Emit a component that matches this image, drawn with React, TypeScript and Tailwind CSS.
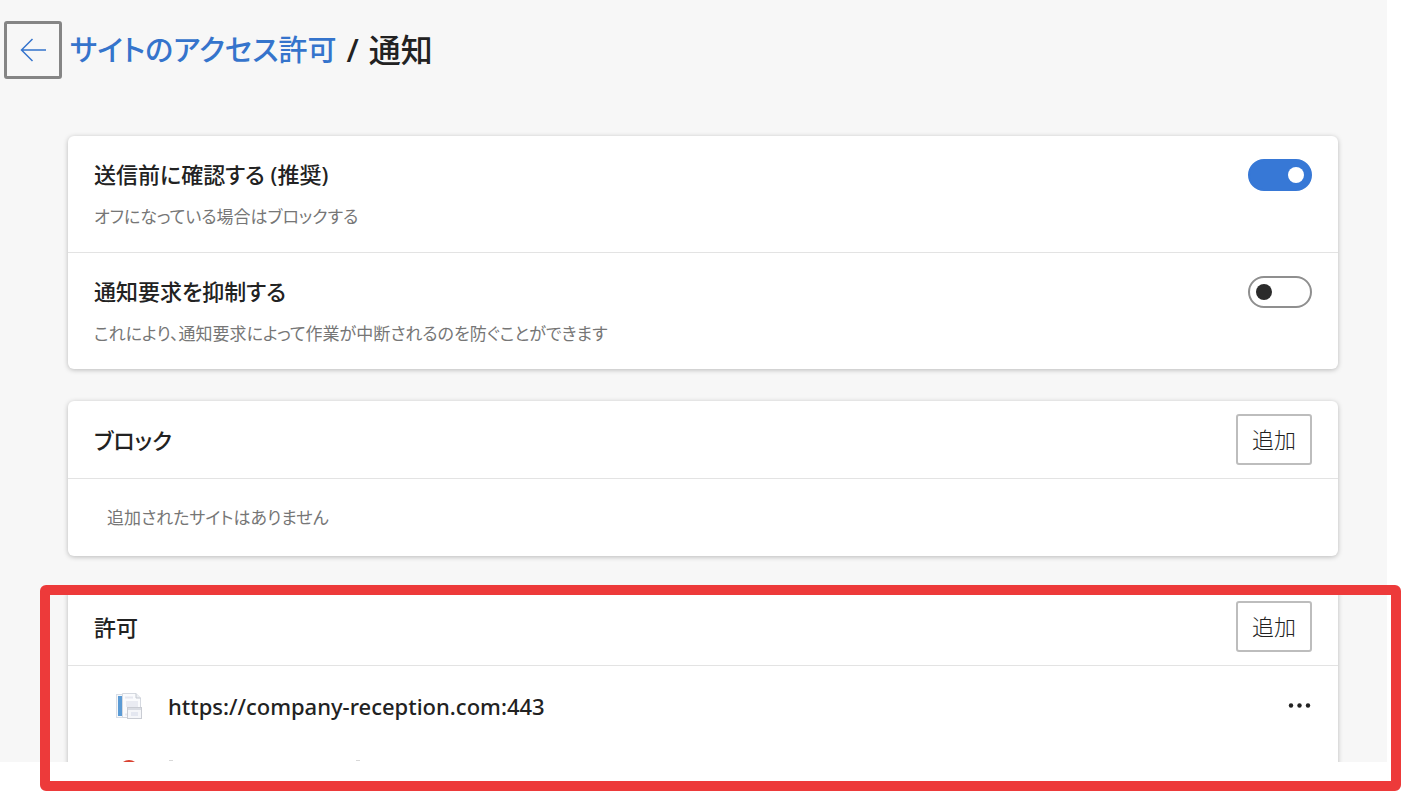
import { useState } from "react";

type SwitchRowProps = {
  id: string;
  title: string;
  description: string;
  checked: boolean;
  onChange: (value: boolean) => void;
};

function SwitchRow({ id, title, description, checked, onChange }: SwitchRowProps) {
  return (
    <div className="flex items-start justify-between px-[26px] pt-[23px] pb-[21px]">
      <div>
        <label htmlFor={id} className="block text-[22px] leading-[30px] font-medium">
          {title}
        </label>
        <p className="mt-3.5 text-[17px] leading-7 text-[#767676]">{description}</p>
      </div>
      <input
        id={id}
        type="checkbox"
        role="switch"
        checked={checked}
        onChange={(e) => onChange(e.target.checked)}
        className="flex h-8 w-16 shrink-0 cursor-pointer appearance-none items-center rounded-full border-2 border-[#8f8f8f] bg-white px-1.5 before:size-4 before:rounded-full before:bg-[#2b2b2b] checked:justify-end checked:border-[#3778d6] checked:bg-[#3778d6] checked:before:bg-white"
      />
    </div>
  );
}

function SectionHeader({ title }: { title: string }) {
  return (
    <div className="flex h-[78px] items-center justify-between px-[26px]">
      <h2 className="text-[22px] leading-[30px] font-medium">{title}</h2>
      <button
        type="button"
        className="h-[51px] rounded-[3px] border-2 border-[#bdbdbd] bg-white px-3.5 text-[22px] font-light hover:bg-[#f5f5f5]"
      >
        追加
      </button>
    </div>
  );
}

function SiteIcon() {
  return (
    <svg viewBox="0 0 26 26" className="size-[26px]" aria-hidden="true">
      <rect x="0.5" y="1.5" width="19" height="23" fill="#f6f8fb" stroke="#d9dee6" />
      <rect x="2" y="3" width="4" height="20" fill="#5b9bd5" />
      <path d="M6.500 0.500H20L24.500 5V24.500H6.500Z" fill="#fafbfd" stroke="#d5d9e0" />
      <path d="M20 0.500V5H24.500" fill="#eceef2" stroke="#c4c9d1" />
      <path d="M9 4.500H17M9 21.500H12" stroke="#e6e8f0" strokeWidth="2" />
      <rect x="10" y="8" width="12" height="6" fill="#e9ebf2" />
      <rect x="11.500" y="14.500" width="14" height="11" fill="#f5f6f9" stroke="#c9ccd3" />
      <path d="M12 16H25" stroke="#d9dce3" strokeWidth="2" />
      <rect x="15" y="19" width="7" height="4" fill="#e4e7f0" />
    </svg>
  );
}

const card = "rounded-md bg-white shadow-[0_1px_5px_rgba(0,0,0,0.25)]";

export default function App() {
  const [askFirst, setAskFirst] = useState(true);
  const [quiet, setQuiet] = useState(false);

  return (
    <div className="relative h-screen overflow-hidden bg-white pr-3.5 pb-[29px] font-['Noto_Sans','Noto_Sans_CJK_JP',sans-serif] text-[#222] [font-feature-settings:'palt']">
      <main className="h-full overflow-hidden bg-[#f7f7f7] pt-[21px]">
        <header className="flex items-center gap-2 pl-1">
          <button
            type="button"
            aria-label="戻る"
            className="flex size-[58px] items-center justify-center rounded-[3px] border-[3px] border-[#858585] text-[#3574cc]"
          >
            <svg viewBox="0 0 26 24" className="h-6 w-[26px]" fill="none" stroke="currentColor" strokeWidth="1.5">
              <path d="M12.500 1L1.500 12L12.500 23M1.500 12H26" />
            </svg>
          </button>
          <h1 className="flex items-center gap-2.5 text-[32px] leading-[44px] font-medium">
            <a href="#permissions" className="text-[29px] text-[#3574cc]">
              サイトのアクセス許可
            </a>
            <span>/</span>
            <span>通知</span>
          </h1>
        </header>

        <div className="mt-[57px] mr-[49px] ml-[68px] flex flex-col gap-8">
          <section className={`${card} divide-y divide-[#e3e3e3]`}>
            <SwitchRow
              id="ask-first"
              title="送信前に確認する (推奨)"
              description="オフになっている場合はブロックする"
              checked={askFirst}
              onChange={setAskFirst}
            />
            <SwitchRow
              id="quiet"
              title="通知要求を抑制する"
              description="これにより、通知要求によって作業が中断されるのを防ぐことができます"
              checked={quiet}
              onChange={setQuiet}
            />
          </section>

          <section className={`${card} divide-y divide-[#e3e3e3]`}>
            <SectionHeader title="ブロック" />
            <p className="flex h-[77px] items-center px-[39px] text-[17px] text-[#767676]">
              追加されたサイトはありません
            </p>
          </section>

          <section className={`${card} divide-y divide-[#e3e3e3]`}>
            <SectionHeader title="許可" />
            <ul className="pt-2">
              <li className="flex h-16 items-center pr-[26px] pl-12">
                <SiteIcon />
                <span className="ml-[26px] text-[22px] leading-[30px] font-medium">
                  https://company-reception.com:443
                </span>
                <button type="button" aria-label="その他の操作" className="ml-auto">
                  <svg viewBox="0 0 24 6" className="h-1.5 w-6" fill="currentColor">
                    <circle cx="3" cy="2.500" r="2.200" />
                    <circle cx="11.500" cy="2.500" r="2.200" />
                    <circle cx="20" cy="2.500" r="2.200" />
                  </svg>
                </button>
              </li>
              {/* Next site, scrolled mostly out of view */}
              <li className="flex h-16 items-start pt-[22px] pl-[51px]">
                <span className="size-5 rounded-full bg-[#d9402f]" />
                <span className="ml-[30px] h-px w-1 bg-[#d8d8d8]" />
                <span className="ml-[183px] h-px w-1 bg-[#d8d8d8]" />
              </li>
            </ul>
          </section>
        </div>
      </main>

      {/* Highlight around the allowed sites */}
      <div className="pointer-events-none absolute top-[585px] right-0 bottom-0 left-10 rounded-md border-[10px] border-[#ed3a3a]" />
    </div>
  );
}
